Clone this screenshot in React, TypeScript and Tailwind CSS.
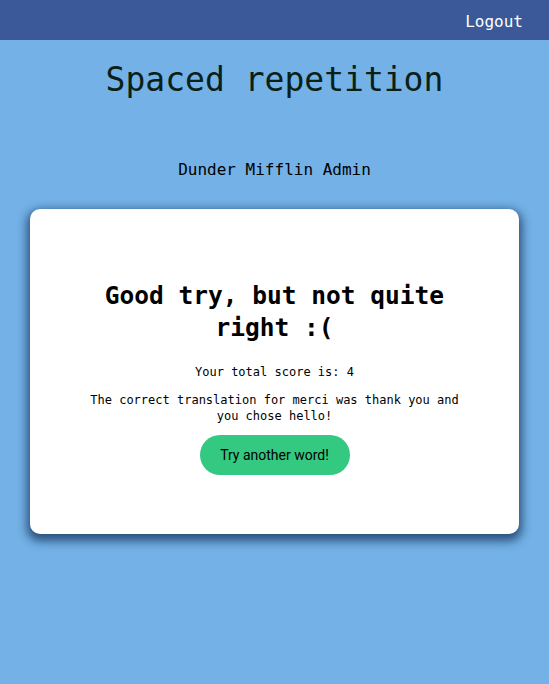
export default function App() {
  return (
    <div className="min-h-[684px] bg-[#73b1e6] font-['DejaVu_Sans_Mono','Liberation_Mono',monospace] text-black">
      <header className="flex h-10 items-center justify-end bg-[#3b5998] px-[26px] pt-[3px]">
        <button className="text-[16px] text-white">Logout</button>
      </header>
      <main className="flex flex-col items-center">
        <h1 className="mt-[18px] text-[33px] leading-[44px] text-[#0a2016]">Spaced repetition</h1>
        <p className="mt-[57px] text-[16px] leading-[22px]">Dunder Mifflin Admin</p>
        <section className="mx-[30px] mt-[28px] flex w-[489px] flex-col items-center rounded-[10px] bg-white px-[50px] pt-[71px] pb-[59px] text-center shadow-[0_4px_10px_3px_rgba(20,50,90,0.75)]">
          <h2 className="text-[24.5px] leading-[32px] font-bold">Good try, but not quite right :(</h2>
          <p className="mt-[20px] text-[12px] leading-4">Your total score is: 4</p>
          <p className="mt-[12px] text-[12px] leading-4">
            The correct translation for merci was thank you and you chose hello!
          </p>
          <button className="mt-[11px] h-10 w-[150px] rounded-full bg-[#33c981] font-['Roboto',sans-serif] text-[14px] text-black">
            Try another word!
          </button>
        </section>
      </main>
    </div>
  );
}
